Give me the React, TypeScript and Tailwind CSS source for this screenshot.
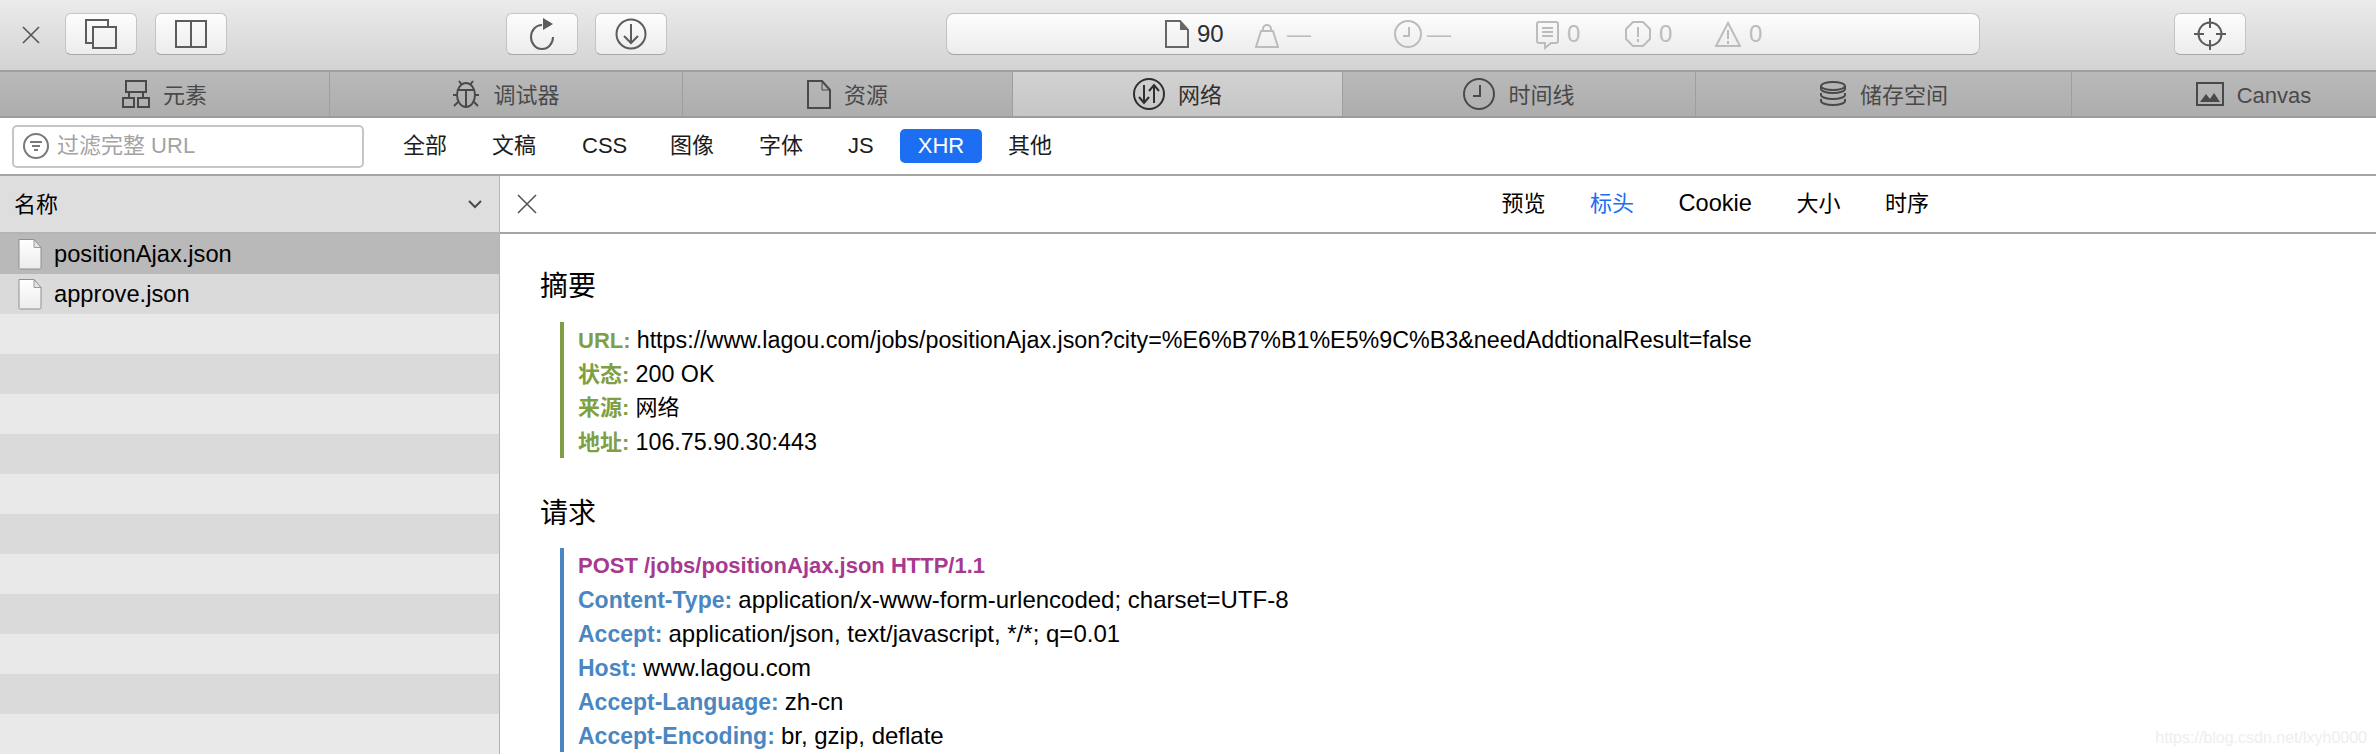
import type { ReactNode } from "react";

const font = "font-['Liberation_Sans','Noto_Sans_CJK_SC',sans-serif]";

function Svg({ w, h, children, className }: { w: number; h: number; children: ReactNode; className?: string }) {
  return (
    <svg width={w} height={h} viewBox={`0 0 ${w} ${h}`} fill="none" stroke="currentColor" strokeWidth="2" className={className}>
      {children}
    </svg>
  );
}

function ToolButton({ children, className = "" }: { children: ReactNode; className?: string }) {
  return (
    <div className={`flex h-[42px] w-[72px] shrink-0 items-center justify-center rounded-[6px] border border-[#c4c4c4] border-b-[#a8a8a8] bg-gradient-to-b from-[#fdfdfd] to-[#ececec] text-[#5c5c5c] ${className}`}>
      {children}
    </div>
  );
}

function Stat({ icon, value, width, dark }: { icon: ReactNode; value: string; width: string; dark?: boolean }) {
  return (
    <div className={`flex items-center gap-[8px] text-[24px] leading-none ${width} ${dark ? "text-[#2e2e2e]" : "text-[#bcbcbc]"}`}>
      {icon}
      <span>{value}</span>
    </div>
  );
}

const tabs: { label: string; width: string; active?: boolean; extra?: string; icon: ReactNode }[] = [
  {
    label: "元素",
    width: "w-[330px]",
    icon: (
      <Svg w={28} h={28}>
        <rect x="4" y="1" width="20" height="11" />
        <rect x="1" y="18" width="11" height="9" />
        <rect x="16" y="18" width="11" height="9" />
        <path d="M7 12v6M21 12v6" />
      </Svg>
    ),
  },
  {
    label: "调试器",
    width: "w-[353px]",
    icon: (
      <Svg w={28} h={30}>
        <ellipse cx="14" cy="16" rx="9" ry="12" />
        <path d="M5 11h18M14 11v17M7 2l3 4M21 2l-3 4M1 16h4M27 16h-4M2 27l4-4M26 27l-4-4" />
      </Svg>
    ),
  },
  {
    label: "资源",
    width: "w-[330px]",
    icon: (
      <Svg w={24} h={29}>
        <path d="M1 1h14l8 9v18H1z" />
        <path d="M15 1v9h8" strokeWidth="1" />
      </Svg>
    ),
  },
  {
    label: "网络",
    width: "w-[330px]",
    active: true,
    icon: (
      <Svg w={32} h={32}>
        <circle cx="16" cy="16" r="15" />
        <path d="M11 7v17M6 19l5 6 5-6M21 25V8M16 13l5-6 5 6" />
      </Svg>
    ),
  },
  {
    label: "时间线",
    width: "w-[353px]",
    icon: (
      <Svg w={32} h={32}>
        <circle cx="16" cy="16" r="15" />
        <path d="M17 7v11h-7" />
      </Svg>
    ),
  },
  {
    label: "储存空间",
    width: "w-[376px]",
    icon: (
      <Svg w={28} h={26}>
        <ellipse cx="14" cy="5" rx="12" ry="4" />
        <path d="M2 5v3c0 2 5 4 12 4s12-2 12-4V5M2 12v2c0 2 5 4 12 4s12-2 12-4v-2M2 18v2c0 2 5 4 12 4s12-2 12-4v-2" />
      </Svg>
    ),
  },
  {
    label: "Canvas",
    width: "w-[305px]",
    extra: "pl-[58px]",
    icon: (
      <Svg w={28} h={24}>
        <rect x="1" y="1" width="26" height="22" />
        <path d="M4 20l6-8 4 5 4-6 6 9z" fill="currentColor" stroke="none" />
      </Svg>
    ),
  },
];

const filters = [
  { label: "全部", width: "w-[89px]" },
  { label: "文稿", width: "w-[90px]" },
  { label: "CSS", width: "w-[88px]" },
  { label: "图像", width: "w-[89px]" },
  { label: "字体", width: "w-[89px]" },
  { label: "JS", width: "w-[52px]" },
];

function SummaryLine({ name, value, cjk }: { name: string; value: string; cjk?: boolean }) {
  return (
    <div className="h-[34px] whitespace-nowrap">
      <span className="font-semibold text-[#7f9f45]">{name}:</span>{" "}
      <span className={cjk ? "" : "text-[23.3px]"}>{value}</span>
    </div>
  );
}

function HeaderLine({ name, value }: { name: string; value: string }) {
  return (
    <div className="h-[34px] whitespace-nowrap">
      <span className="text-[23px] font-semibold text-[#4a87c2]">{name}:</span>{" "}
      <span className="text-[24px]">{value}</span>
    </div>
  );
}

function FileIcon() {
  return (
    <svg width="24" height="32" viewBox="0 0 24 32" className="shrink-0">
      <defs>
        <linearGradient id="paper" x1="0" y1="0" x2="0" y2="1">
          <stop offset="0" stopColor="#ffffff" />
          <stop offset="1" stopColor="#ececec" />
        </linearGradient>
      </defs>
      <path d="M1 1.5h15l7 8v20a1.5 1.5 0 0 1-1.5 1.5h-19A1.5 1.5 0 0 1 1 29.5z" fill="url(#paper)" stroke="#8f8f8f" />
      <path d="M16 1.5v8h7z" fill="#e4e4e4" stroke="#9a9a9a" />
    </svg>
  );
}

export default function App() {
  const rows = Array.from({ length: 13 }, (_, i) => i);

  return (
    <div className={`relative h-[754px] w-[2376px] overflow-hidden bg-white text-[22px] text-black ${font}`}>
      {/* Toolbar */}
      <div className="flex h-[72px] items-start border-b-2 border-[#a0a0a0] bg-gradient-to-b from-[#ebebeb] to-[#d3d3d3] pt-[13px]">
        <div className="flex h-[42px] w-[65px] shrink-0 items-center justify-center text-[#555555]">
          <Svg w={18} h={18} className="mt-[1px] -ml-[4px]">
            <path d="M1 1l16 16M17 1L1 17" strokeWidth="1.6" />
          </Svg>
        </div>
        <ToolButton>
          <Svg w={32} h={30}>
            <path d="M8 24H1V1h22v7" />
            <rect x="8" y="8" width="23" height="21" />
          </Svg>
        </ToolButton>
        <ToolButton className="ml-[18px]">
          <Svg w={32} h={28}>
            <rect x="1" y="1" width="30" height="26" />
            <path d="M16 1v26" />
          </Svg>
        </ToolButton>
        <ToolButton className="ml-[279px]">
          <Svg w={26} h={32}>
            <path d="M13 7A11 12 0 1 0 24 19" />
            <path d="M14 0l10 6-10 6z" fill="currentColor" stroke="none" />
          </Svg>
        </ToolButton>
        <ToolButton className="ml-[17px]">
          <Svg w={32} h={32}>
            <circle cx="16" cy="16" r="14.5" />
            <path d="M16 6v19M9 18l7 7 7-7" />
          </Svg>
        </ToolButton>
        <div className="ml-[279px] flex h-[42px] w-[1034px] shrink-0 items-center rounded-[8px] border border-[#c2c2c2] border-b-[#a4a4a4] bg-gradient-to-b from-[#fdfdfd] to-[#ececec] pl-[218px]">
          <Stat
            dark
            width="w-[90px]"
            value="90"
            icon={
              <Svg w={24} h={28} className="text-[#666666]">
                <path d="M1 1h14l8 9v17H1z" />
                <path d="M15 1l8 9h-8z" fill="currentColor" stroke="none" />
              </Svg>
            }
          />
          <Stat
            width="w-[139px]"
            value="—"
            icon={
              <Svg w={24} h={24} className="mt-[3px]">
                <path d="M6 7h12l5 16H1zM8 7V5a4 4 0 0 1 8 0v2" />
              </Svg>
            }
          />
          <Stat
            width="w-[142px]"
            value="—"
            icon={
              <Svg w={28} h={28} className="-mr-[3px]">
                <circle cx="14" cy="14" r="13" />
                <path d="M15 7v9H9" />
              </Svg>
            }
          />
          <Stat
            width="w-[89px]"
            value="0"
            icon={
              <Svg w={23} h={29} className="mt-[3px]">
                <path d="M3 1h17a2 2 0 0 1 2 2v17a2 2 0 0 1-2 2h-5l-6 5v-5H3a2 2 0 0 1-2-2V3a2 2 0 0 1 2-2z" />
                <path d="M6 7h11M6 11h11M6 15h11" />
              </Svg>
            }
          />
          <Stat
            width="w-[90px]"
            value="0"
            icon={
              <Svg w={26} h={26}>
                <path d="M8 1h10l7 7v10l-7 7H8l-7-7V8z" />
                <path d="M13 6v10M13 18v3" />
              </Svg>
            }
          />
          <Stat
            width="w-[60px]"
            value="0"
            icon={
              <Svg w={26} h={26}>
                <path d="M13 2l12 23H1z" />
                <path d="M13 9v9M13 20v3" />
              </Svg>
            }
          />
        </div>
        <ToolButton className="ml-[194px]">
          <Svg w={34} h={32}>
            <circle cx="17" cy="16" r="11.5" />
            <path d="M17 0v10M17 22v10M1 16h10M23 16h10" />
          </Svg>
        </ToolButton>
      </div>

      {/* Tab bar */}
      <div className="flex h-[46px] border-b-2 border-[#9c9c9c]">
        {tabs.map((tab, i) => (
          <div
            key={tab.label}
            className={`flex shrink-0 items-center justify-center gap-[13px] ${tab.width} ${tab.extra ?? ""} ${i < tabs.length - 1 ? "border-r border-[#9e9e9e]" : ""} ${
              tab.active
                ? "bg-gradient-to-b from-[#d2d2d2] to-[#c6c6c6] text-[#2f2f2f]"
                : "bg-gradient-to-b from-[#b9b9b9] to-[#adadad] text-[#494949]"
            }`}
          >
            {tab.icon}
            <span className="pt-[2px]">{tab.label}</span>
          </div>
        ))}
      </div>

      {/* Filter bar */}
      <div className="flex h-[58px] items-center border-b-2 border-[#a4a4a4] pl-[12px]">
        <div className="flex h-[43px] w-[352px] shrink-0 items-center gap-[8px] rounded-[5px] border-2 border-[#c6c6c6] pl-[9px] text-[#a3a3a3]">
          <Svg w={26} h={26} className="shrink-0 text-[#7a7a7a]">
            <circle cx="13" cy="13" r="12" />
            <path d="M7 9h12M9 13h8M11 17h4" />
          </Svg>
          <span className="pb-[2px]">过滤完整 URL</span>
        </div>
        <div className="ml-[39px] flex items-center text-[#1c1c1c]">
          {filters.map((f) => (
            <span key={f.label} className={`pb-[2px] ${f.width}`}>
              {f.label}
            </span>
          ))}
          <span className="flex h-[34px] w-[82px] items-center justify-center rounded-[5px] bg-[#1c6ef2] pb-[2px] text-white">XHR</span>
          <span className="ml-[26px] pb-[2px]">其他</span>
        </div>
      </div>

      <div className="flex">
        {/* Request list */}
        <div className="w-[500px] shrink-0 border-r border-[#b4b4b4]">
          <div className="flex h-[58px] items-center justify-between border-b-2 border-[#b4b4b4] bg-[#dedede] pr-[17px] pl-[14px]">
            <span>名称</span>
            <svg width="14" height="9" viewBox="0 0 14 9" fill="none" stroke="#4a4a4a" strokeWidth="2">
              <path d="M1 1l6 6 6-6" />
            </svg>
          </div>
          {rows.map((i) => (
            <div
              key={i}
              className={`flex h-[40px] items-center gap-[12px] pl-[18px] ${i === 0 ? "bg-[#b9b9b9]" : i % 2 === 1 ? "bg-[#dadada]" : "bg-[#e9e9e9]"}`}
            >
              {i < 2 && (
                <>
                  <FileIcon />
                  <span className="pt-[2px] text-[23.7px]">{i === 0 ? "positionAjax.json" : "approve.json"}</span>
                </>
              )}
            </div>
          ))}
        </div>

        {/* Details */}
        <div className="min-w-0 flex-1">
          <div className="flex h-[58px] items-center justify-between border-b-2 border-[#a4a4a4] pr-[447px] pl-[17px]">
            <div className="text-[#555555]">
              <Svg w={20} h={20}>
                <path d="M1 1l18 18M19 1L1 19" strokeWidth="1.6" />
              </Svg>
            </div>
            <div className="flex items-center gap-[44.5px]">
              <span>预览</span>
              <span className="text-[#1c6ef2]">标头</span>
              <span className="text-[23.6px]">Cookie</span>
              <span>大小</span>
              <span>时序</span>
            </div>
          </div>

          <div className="pl-[40px]">
            <h2 className="mt-[36px] mb-[-2px] text-[28px] leading-[34px]">摘要</h2>
            <div className="mt-[20px] ml-[20px] border-l-4 border-[#7f9f45] pl-[14px] leading-[36px]">
              <SummaryLine name="URL" value="https://www.lagou.com/jobs/positionAjax.json?city=%E6%B7%B1%E5%9C%B3&needAddtionalResult=false" />
              <SummaryLine name="状态" value="200 OK" />
              <SummaryLine cjk name="来源" value="网络" />
              <SummaryLine name="地址" value="106.75.90.30:443" />
            </div>

            <h2 className="mt-[39px] mb-[-2px] text-[28px] leading-[34px]">请求</h2>
            <div className="mt-[19px] ml-[20px] border-l-4 border-[#4a87c2] pl-[14px] leading-[36px]">
              <div className="h-[34px] font-semibold whitespace-nowrap text-[#a7398f]">POST /jobs/positionAjax.json HTTP/1.1</div>
              <HeaderLine name="Content-Type" value="application/x-www-form-urlencoded; charset=UTF-8" />
              <HeaderLine name="Accept" value="application/json, text/javascript, */*; q=0.01" />
              <HeaderLine name="Host" value="www.lagou.com" />
              <HeaderLine name="Accept-Language" value="zh-cn" />
              <HeaderLine name="Accept-Encoding" value="br, gzip, deflate" />
            </div>
          </div>
        </div>
      </div>

      {/* Watermark */}
      <div className="absolute right-[9px] bottom-[8px] text-[16px] leading-none text-[#eeeeee]">https://blog.csdn.net/lxyh0000</div>
    </div>
  );
}
